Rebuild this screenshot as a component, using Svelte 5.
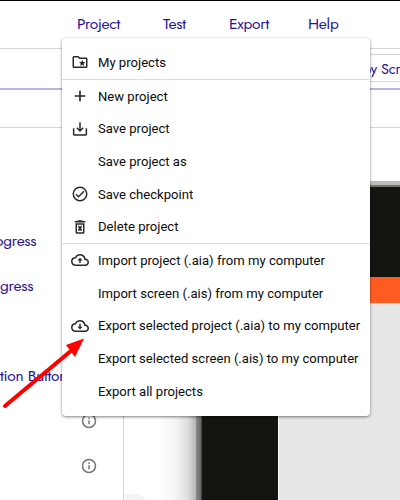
<script>
  const nav = ["Project", "Test", "Export", "Help"];

  const groups = [
    [{ label: "My projects", icon: "folder" }],
    [
      { label: "New project", icon: "plus" },
      { label: "Save project", icon: "save" },
      { label: "Save project as" },
      { label: "Save checkpoint", icon: "check" },
      { label: "Delete project", icon: "trash" },
    ],
    [
      { label: "Import project (.aia) from my computer", icon: "upload" },
      { label: "Import screen (.ais) from my computer" },
      { label: "Export selected project (.aia) to my computer", icon: "download" },
      { label: "Export selected screen (.ais) to my computer" },
      { label: "Export all projects" },
    ],
  ];

  const components = ["ogress", "gress", "", "tion Button", "", ""];
</script>

<div class="app">
  <header>
    <nav>
      {#each nav as label}
        <a href="#top" class={label.toLowerCase()}>{label}</a>
      {/each}
    </nav>
  </header>
  <div class="toolbar"><button>by Scr</button></div>
  <div class="panel-head"></div>
  <main>
    <aside>
      {#each components as name, i}
        <div class="component" class:shifted={i === 0}>
          <span>{name}</span>
          <svg width="16" height="16" viewBox="0 0 16 16">
            <circle cx="8" cy="8" r="6.5" />
            <path d="M8 7.200v4M8 4.500v1.400" />
          </svg>
        </div>
      {/each}
    </aside>
    <section>
      <div class="glow"></div>
      <div class="phone">
        <div class="bezel"></div>
        <div class="screen">
          <div class="titlebar"></div>
        </div>
      </div>
      <div class="corner"></div>
    </section>
  </main>

  <div class="menu">
    {#each groups as group}
      <ul>
        {#each group as item}
          <li>
            <span class="icon">
              {#if item.icon}
                <svg width="18" height="18" viewBox="0 0 24 24">
                  {#if item.icon === "folder"}
                    <path d="M20 6h-8l-2-2H4c-1.100 0-2 .9-2 2v12c0 1.100.9 2 2 2h16c1.100 0 2-.9 2-2V8c0-1.100-.9-2-2-2zm0 12H4V6h5.200l2 2H20v10z" />
                    <path d="M15 9l1.200 2.900 3.100.3-2.400 2 .8 3.100-2.700-1.700-2.700 1.700.8-3.100-2.400-2 3.100-.3z" />
                  {:else if item.icon === "plus"}
                    <path d="M19 13.100h-5.900V19h-2.200v-5.900H5v-2.200h5.900V5h2.200v5.900H19z" />
                  {:else if item.icon === "save"}
                    <path d="M2.500 11h2v8h15v-8h2v8c0 1.100-.9 2-2 2h-15c-1.100 0-2-.9-2-2zM11 3h2v9.200l2.600-2.600L17 11l-5 5-5-5 1.400-1.400 2.600 2.600z" />
                  {:else if item.icon === "check"}
                    <path d="M12 2a10 10 0 100 20 10 10 0 000-20zm0 18a8 8 0 110-16 8 8 0 010 16zM16.600 7.600L10 14.200l-2.600-2.600L6 13l4 4 8-8z" />
                  {:else if item.icon === "trash"}
                    <path d="M15.500 4l-1-1h-5l-1 1H5v2h14V4zM6 7v12c0 1.100.9 2 2 2h8c1.100 0 2-.9 2-2V7zm10 12H8V9h8zM9.200 11.500L10.600 10l1.400 1.500 1.400-1.500 1.400 1.500-1.400 2.300 1.400 2.300-1.400 1.400-1.400-1.400-1.400 1.400-1.400-1.400 1.400-2.300z" />
                  {:else}
                    <path d="M19.350 10.040A7.490 7.490 0 0012 4C9.110 4 6.600 5.640 5.350 8.040A5.994 5.994 0 000 14c0 3.310 2.690 6 6 6h13c2.760 0 5-2.240 5-5 0-2.640-2.050-4.780-4.650-4.960zM19 18H6c-2.210 0-4-1.790-4-4 0-2.050 1.530-3.760 3.560-3.970l1.070-.11.5-.95A5.469 5.469 0 0112 6c2.620 0 4.880 1.860 5.390 4.430l.3 1.500 1.530.11A2.980 2.980 0 0122 15c0 1.650-1.350 3-3 3z" />
                    {#if item.icon === "upload"}
                      <path d="M8.500 12.500H11V16h2v-3.500h2.500L12 9z" />
                    {:else}
                      <path d="M13 9h-2v4H8.500l3.500 3.500 3.500-3.500H13z" />
                    {/if}
                  {/if}
                </svg>
              {/if}
            </span>
            <span class="label">{item.label}</span>
          </li>
        {/each}
      </ul>
    {/each}
  </div>

  <svg class="arrow" width="90" height="75" viewBox="0 0 90 75">
    <path d="M5 69L72 13" stroke="#f00" stroke-width="4" stroke-linecap="round" />
    <path d="M84 1.500L66 8l9 12z" fill="#f00" />
  </svg>
</div>

<style>
  :global(body) {
    margin: 0;
    overflow: hidden;
  }

  .app {
    position: relative;
    display: flex;
    flex-direction: column;
    width: 400px;
    height: 500px;
    overflow: hidden;
    box-sizing: border-box;
    border-top: 1px solid #000;
    background: #fff;
    color: #281196;
    font-family: Jost, Lato, sans-serif;
    font-size: 15.5px;
    letter-spacing: -0.25px;
  }

  header {
    flex: none;
    height: 47px;
    border-bottom: 1px solid #d6d6d6;
  }

  nav {
    display: flex;
    padding: 14px 0 0 77px;
    line-height: 18px;
  }

  nav a {
    flex: none;
    color: inherit;
    text-decoration: none;
  }

  .project { width: 86px; }
  .test { width: 66px; }
  .export { width: 79px; }

  .toolbar {
    display: flex;
    flex: none;
    height: 41px;
    padding: 5px 0 0 357px;
    box-sizing: border-box;
    border-bottom: 2px solid #beb2df;
  }

  .toolbar button {
    flex: none;
    height: 28px;
    width: 60px;
    padding: 0 5px;
    border: 1px solid #d8d8d8;
    background: #fff;
    color: inherit;
    font: inherit;
    font-size: 14.5px;
    letter-spacing: -0.25px;
    text-align: left;
  }

  .panel-head {
    flex: none;
    height: 38px;
    box-sizing: border-box;
    border-bottom: 1px solid #d6d6d6;
  }

  main {
    display: flex;
    flex: 1;
    min-height: 0;
  }

  aside {
    flex: none;
    width: 123px;
    padding-top: 90px;
    border-right: 1px solid #d6d6d6;
  }

  .component {
    display: flex;
    align-items: center;
    height: 45px;
  }

  .component span {
    width: 81px;
    white-space: nowrap;
  }

  .shifted span {
    width: 86px;
    margin-left: -5px;
  }

  .component svg {
    fill: none;
    stroke: #757575;
    stroke-width: 1.5;
  }

  section {
    position: relative;
    display: flex;
    flex: 1;
    min-width: 0;
    padding-top: 53px;
  }

  .glow {
    flex: none;
    width: 78px;
    background: linear-gradient(
      90deg,
      #fff 45%,
      #f3f3f3 68%,
      #ddd 82%,
      #b5b5b5 92%,
      #858585 93%,
      #6c6c6c 98%,
      #333
    );
  }

  .phone {
    flex: 1;
    background: #141411;
  }

  .bezel {
    height: 96px;
    box-sizing: border-box;
    border-top: 4px solid #bbb;
    box-shadow: inset 0 2px #737373;
  }

  .screen {
    height: 280px;
    margin-left: 76px;
    border-left: 1px solid #fff;
    background: #e7e7e7;
  }

  .titlebar {
    height: 26px;
    border-bottom: 1px solid #bdd9f2;
    background: #ff5c22;
  }

  .corner {
    position: absolute;
    bottom: -18px;
    left: 1px;
    width: 25px;
    height: 24px;
    border-radius: 0 16px 0 0;
    background: #f3f3f3;
  }

  .menu {
    position: absolute;
    top: 37px;
    left: 62px;
    width: 308px;
    height: 378px;
    padding: 8px 0;
    box-sizing: border-box;
    border-radius: 4px;
    background: #fff;
    box-shadow: 0 1px 3px rgba(0, 0, 0, 0.5);
    color: #0c0c0c;
    font-family: Roboto, sans-serif;
    font-size: 13.1px;
    letter-spacing: 0;
  }

  ul {
    margin: 0;
    padding: 0;
    list-style: none;
  }

  ul + ul {
    border-top: 1px solid #ddd;
  }

  li {
    display: flex;
    align-items: center;
    height: 32.7px;
    white-space: nowrap;
  }

  .icon {
    display: flex;
    flex: none;
    width: 27px;
    padding-left: 9px;
    fill: #2a2a2e;
  }

  .arrow {
    position: absolute;
    top: 336px;
    left: 0;
  }
</style>
